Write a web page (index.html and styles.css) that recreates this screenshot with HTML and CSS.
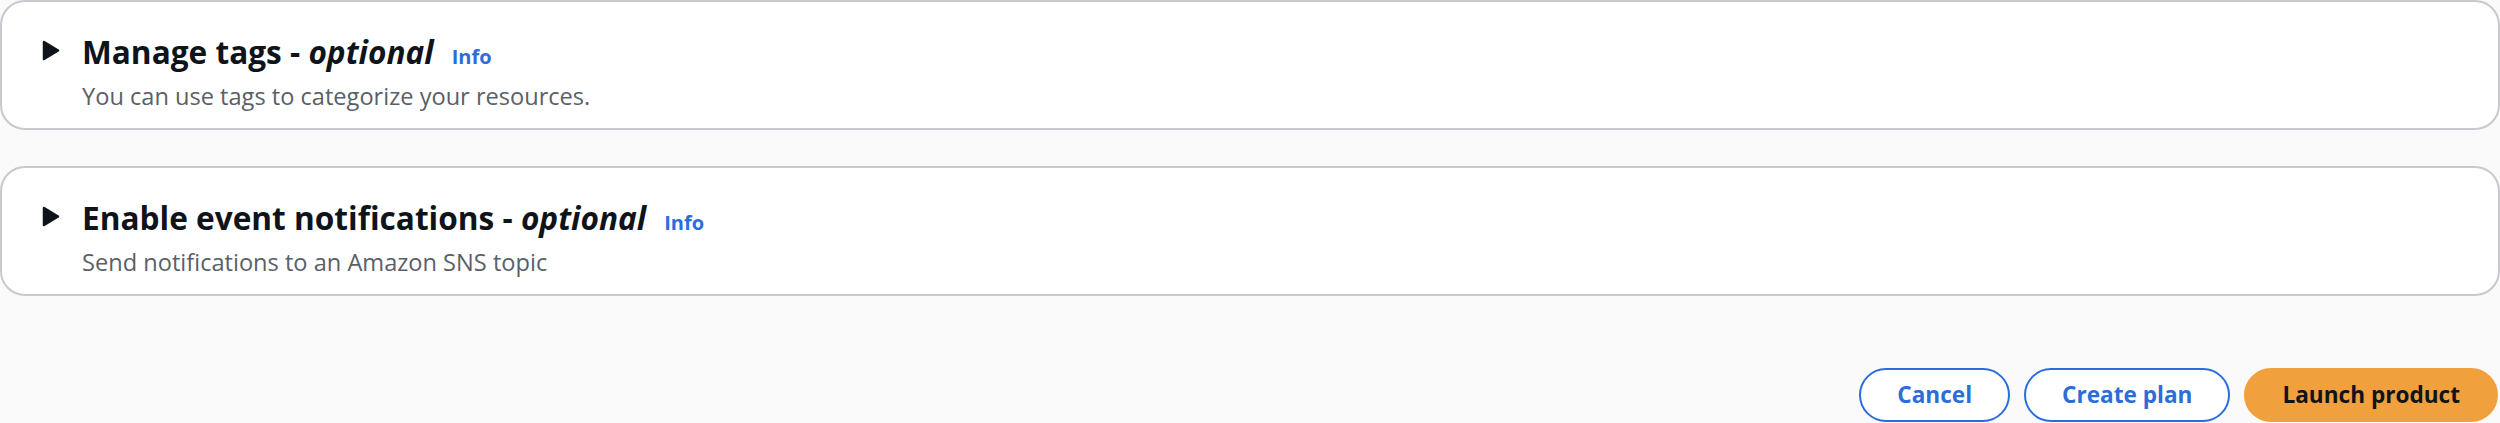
FILE: index.html
```html
<!DOCTYPE html>
<html lang="en">
<head>
<meta charset="utf-8">
<title>Launch product</title>
<link rel="stylesheet" href="styles.css">
</head>
<body>
<main class="page">
  <section class="card">
    <div class="card-header">
      <svg class="caret" width="18" height="21" viewBox="0 0 18 21" aria-hidden="true">
        <polygon points="2,2 16,10.5 2,19" />
      </svg>
      <div class="heading">
        <h2 class="title">Manage tags - <i>optional</i><a class="info" href="#">Info</a></h2>
        <p class="desc">You can use tags to categorize your resources.</p>
      </div>
    </div>
  </section>
  <section class="card">
    <div class="card-header">
      <svg class="caret" width="18" height="21" viewBox="0 0 18 21" aria-hidden="true">
        <polygon points="2,2 16,10.5 2,19" />
      </svg>
      <div class="heading">
        <h2 class="title">Enable event notifications - <i>optional</i><a class="info" href="#">Info</a></h2>
        <p class="desc">Send notifications to an Amazon SNS topic</p>
      </div>
    </div>
  </section>
  <div class="actions">
    <button class="btn btn-normal" type="button">Cancel</button>
    <button class="btn btn-normal" type="button">Create plan</button>
    <button class="btn btn-primary" type="button">Launch product</button>
  </div>
</main>
</body>
</html>
```
FILE: styles.css
```css
html, body {
  margin: 0;
  padding: 0;
  background: #fafafa;
}

body {
  font-family: "Open Sans", "Noto Sans", sans-serif;
  color: #0f141a;
}

.page {
  display: flex;
  flex-direction: column;
}

.card {
  box-sizing: border-box;
  height: 130px;
  background: #ffffff;
  border: 2px solid #c8c8ce;
  border-radius: 25px;
  padding: 30px 40px 21px 40px;
}

.card + .card {
  margin-top: 36px;
}

.card-header {
  display: flex;
  align-items: flex-start;
  gap: 22px;
}

.caret {
  flex: none;
  margin-top: 8px;
}

.caret polygon {
  fill: #0f141a;
  stroke: #0f141a;
  stroke-width: 2.5;
  stroke-linejoin: round;
}

.heading {
  display: flex;
  flex-direction: column;
}

.title {
  margin: 0;
  font-size: 31.6px;
  line-height: 40px;
  font-weight: 700;
  color: #0f141a;
  white-space: nowrap;
}

.title i {
  font-style: italic;
  font-weight: 700;
}

.info {
  margin-left: 18px;
  font-size: 20px;
  font-weight: 700;
  color: #2a6ddb;
  text-decoration: none;
}

.desc {
  margin: 3px 0 0 0;
  font-size: 23.6px;
  line-height: 32px;
  color: #5b5f67;
  white-space: nowrap;
}

.actions {
  display: flex;
  justify-content: flex-end;
  gap: 14px;
  margin-top: 72px;
  padding-right: 2px;
}

.btn {
  box-sizing: border-box;
  height: 54px;
  padding: 0 36px;
  border-radius: 28px;
  border: 2px solid #2a6ddb;
  font-family: "Open Sans", "Noto Sans", sans-serif;
  font-size: 22.6px;
  font-weight: 700;
  line-height: 1;
  display: flex;
  align-items: center;
  cursor: pointer;
}

.btn-normal {
  background: #ffffff;
  color: #2a6ddb;
}

.btn-primary {
  background: #f0a03c;
  border-color: #f0a03c;
  color: #0f141a;
}
```
